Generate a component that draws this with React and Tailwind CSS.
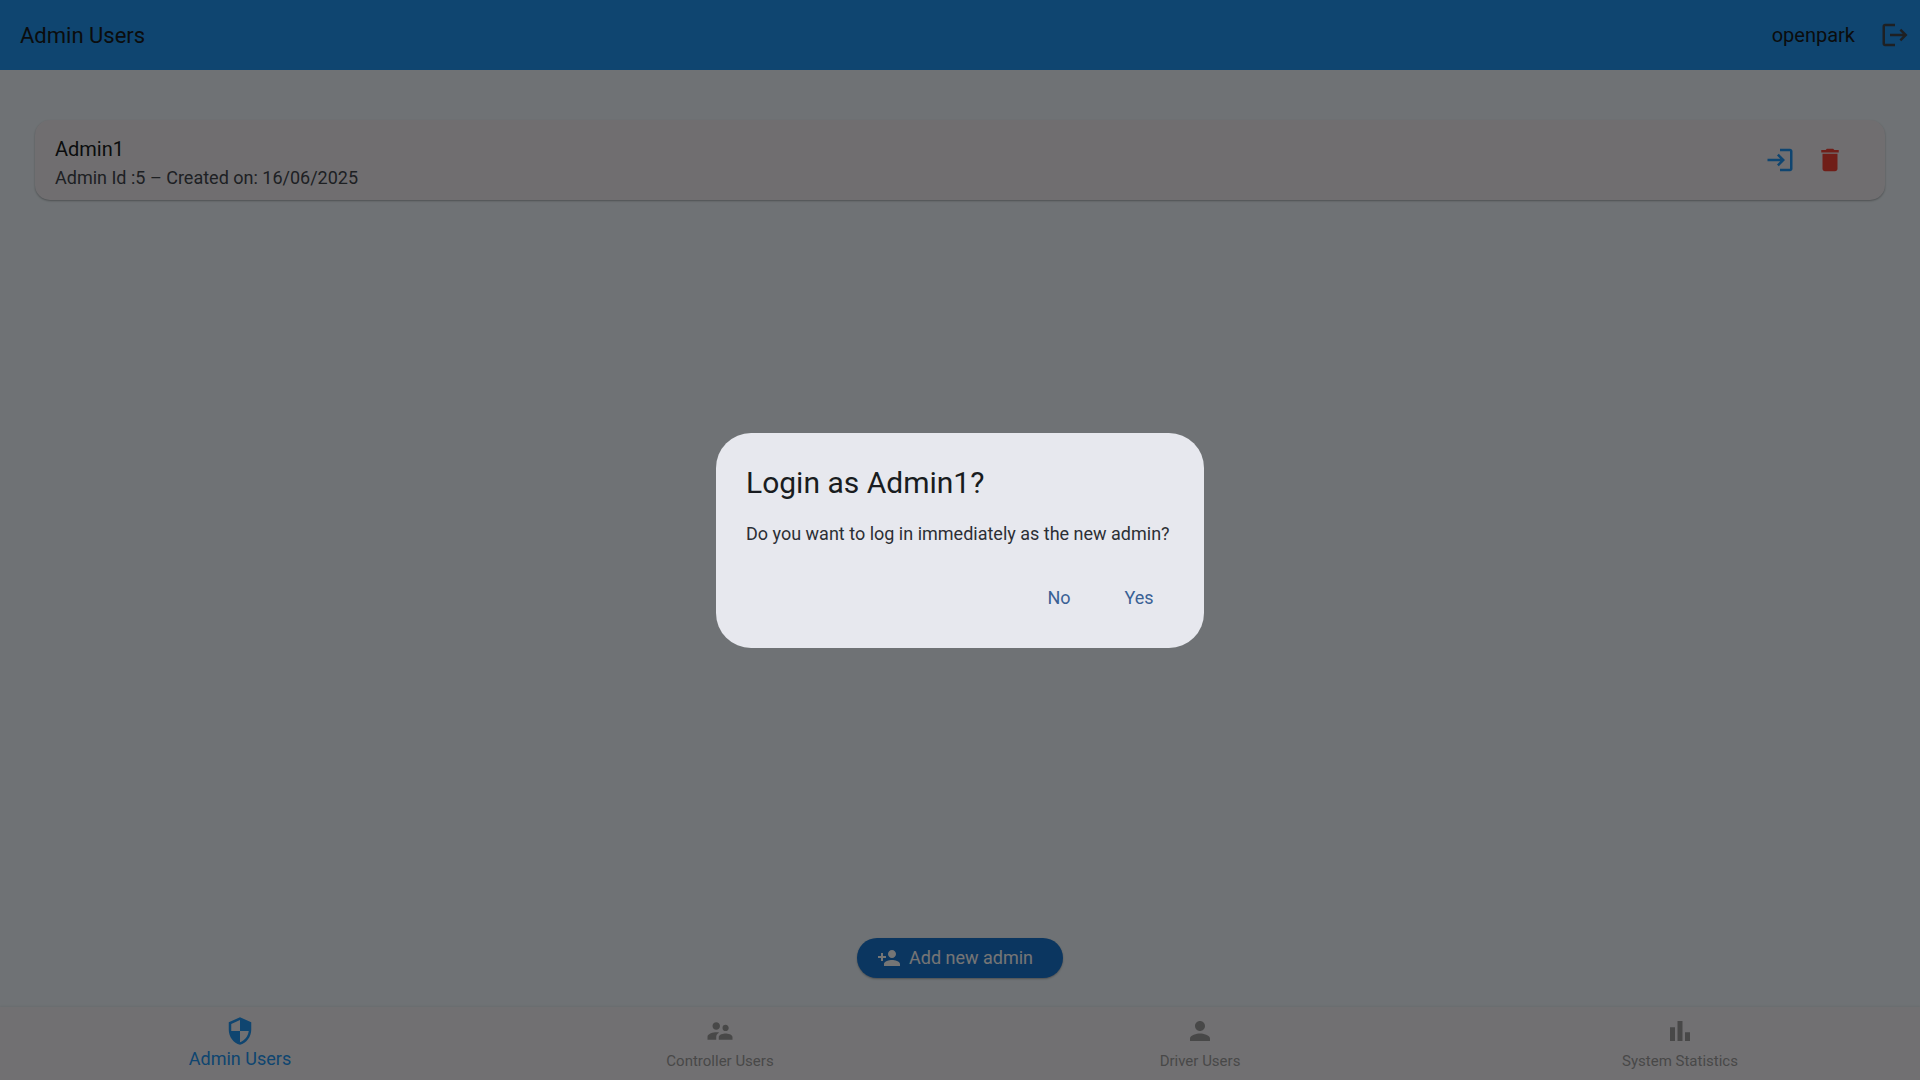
import {
  MdBarChart,
  MdDelete,
  MdLogin,
  MdLogout,
  MdPerson,
  MdPersonAdd,
  MdSecurity,
  MdSupervisorAccount,
} from "react-icons/md";

const admins = [{ name: "Admin1", id: 5, created: "16/06/2025" }];

const tabs = [
  { label: "Admin Users", Icon: MdSecurity, active: true },
  { label: "Controller Users", Icon: MdSupervisorAccount },
  { label: "Driver Users", Icon: MdPerson },
  { label: "System Statistics", Icon: MdBarChart },
];

function Header() {
  return (
    <header className="flex h-[70px] shrink-0 items-center justify-between bg-[#2196f3] pr-2.5 pl-5">
      <h1 className="text-[22px] text-[#191c20]">Admin Users</h1>
      <div className="flex items-center gap-[25px]">
        <span className="text-xl text-[#191c20]">openpark</span>
        <button type="button" aria-label="Log out" className="text-[#43474e]">
          <MdLogout size={30} />
        </button>
      </div>
    </header>
  );
}

function AdminCard({ name, id, created }) {
  return (
    <li className="flex h-20 items-center justify-between rounded-[15px] bg-[#f3f0f5] pr-10 pl-5 shadow-[0_1px_2px_rgba(0,0,0,0.3)]">
      <div className="pt-1.5">
        <h2 className="text-xl leading-[30px] text-[#191c20]">{name}</h2>
        <p className="text-lg leading-7 text-[#43474e]">
          Admin Id :{id} – Created on: {created}
        </p>
      </div>
      <div className="flex gap-5">
        <button type="button" aria-label={`Log in as ${name}`} className="text-[#2196f3]">
          <MdLogin size={30} />
        </button>
        <button type="button" aria-label={`Delete ${name}`} className="text-[#f44336]">
          <MdDelete size={30} />
        </button>
      </div>
    </li>
  );
}

function BottomNav() {
  return (
    <nav className="grid h-[73px] shrink-0 grid-cols-4 bg-[#f7f4f8] shadow-[0_-1px_2px_rgba(0,0,0,0.06)]">
      {tabs.map(({ label, Icon, active }) => (
        <button
          key={label}
          type="button"
          aria-current={active ? "page" : undefined}
          className={
            active
              ? "flex flex-col items-center pt-[9px] text-lg leading-[26px] text-[#2196f3]"
              : "flex flex-col items-center pt-[9px] text-[15px] leading-[30px] text-[#9e9e9e]"
          }
        >
          <Icon size={30} />
          {label}
        </button>
      ))}
    </nav>
  );
}

function LoginDialog() {
  return (
    <div className="fixed inset-0 flex items-center justify-center bg-black/54">
      <div
        role="dialog"
        aria-modal="true"
        aria-labelledby="dialog-title"
        className="w-[488px] rounded-[35px] bg-[#e7e8ee] p-[30px]"
      >
        <h2 id="dialog-title" className="text-3xl leading-10 text-[#191c20]">
          Login as Admin1?
        </h2>
        <p className="mt-[18px] text-lg leading-[26px] text-[#2c2f35]">
          Do you want to log in immediately as the new admin?
        </p>
        <div className="mt-[31px] flex justify-end gap-2.5 text-lg text-[#3a6195]">
          <button type="button" className="h-10 min-w-[70px] px-5">
            No
          </button>
          <button type="button" className="h-10 min-w-[70px] px-5">
            Yes
          </button>
        </div>
      </div>
    </div>
  );
}

export default function App() {
  return (
    <div className="flex h-screen flex-col bg-[#f1f9fe] font-[Roboto,sans-serif]">
      <Header />
      <main className="flex grow flex-col items-center justify-between px-[35px] pt-[50px] pb-[29px]">
        <ul className="w-full">
          {admins.map((admin) => (
            <AdminCard key={admin.id} {...admin} />
          ))}
        </ul>
        <button
          type="button"
          className="flex h-10 items-center gap-2 rounded-full bg-[#1976d2] pr-[30px] pl-5 text-lg text-white shadow-[0_1px_2px_rgba(0,0,0,0.3)]"
        >
          <MdPersonAdd size={24} />
          Add new admin
        </button>
      </main>
      <BottomNav />
      <LoginDialog />
    </div>
  );
}
